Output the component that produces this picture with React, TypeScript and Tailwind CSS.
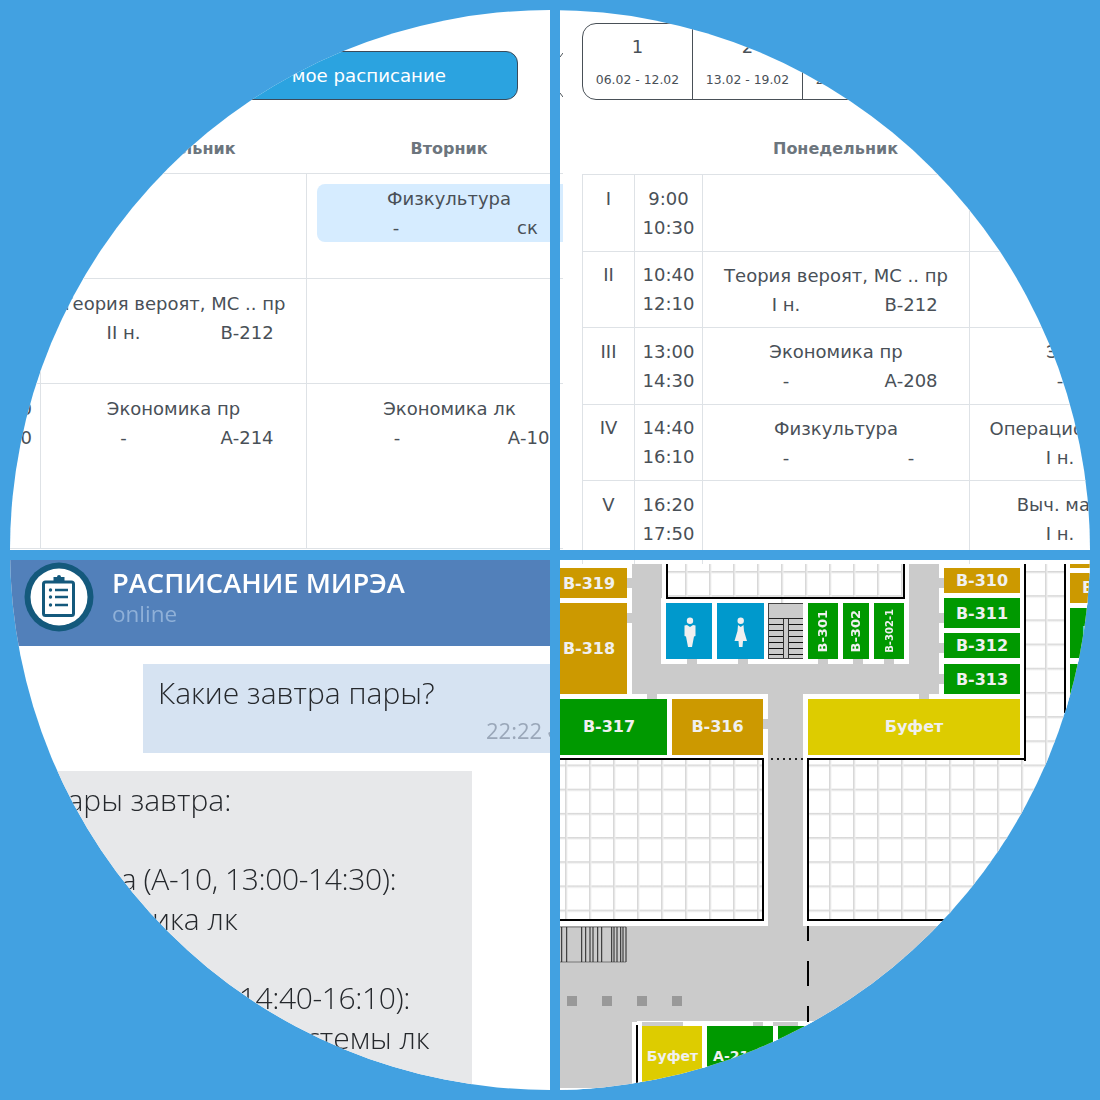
import type { ReactNode } from 'react';

const tableText = "font-['DejaVu_Sans',sans-serif] text-[18px] leading-[29px] text-[#495057]";

function Lesson({ title, left, right, cols, titleClass }: { title: string; left: string; right: string; cols: string; titleClass?: string }) {
  return (
    <div className="pt-[10px] text-center whitespace-nowrap">
      <div className={titleClass}>{title}</div>
      <div className={`grid ${cols}`}>
        <span>{left}</span>
        <span>{right}</span>
      </div>
    </div>
  );
}

const monCols = 'grid-cols-[148px_102px] pl-[9px]';
const monColsLeft = 'grid-cols-[145px_102px] pl-[10px]';
const tueCols = 'grid-cols-[160px_103px] pl-[10px]';

function Time({ from, to }: { from: string; to: string }) {
  return (
    <div className="pt-[10px] pr-[8px] whitespace-nowrap flex flex-col items-end">
      <div>{from}</div>
      <div>{to}</div>
    </div>
  );
}

function RightSchedule() {
  return (
    <div className={`bg-white overflow-hidden relative ${tableText}`}>
      <div className="flex justify-end pt-[41px] pr-[32px]">
        <div className="w-[400px] h-[49px] rounded-[12px] border border-[#3b4a5a] bg-[#2ba3e0] flex items-center justify-end pr-[71px] text-white text-[18.2px] whitespace-nowrap">
          мое расписание
        </div>
      </div>
      <div className="grid grid-cols-[30px_266px_286px] h-[73px] w-[582px] items-end pb-[13px] text-center font-bold text-[16px] leading-[22px] text-[#6c757d]">
        <span />
        <span>Понедельник</span>
        <span>Вторник</span>
      </div>
      <div className="w-[582px]">
        <div className="grid grid-cols-[30px_266px_286px] h-[105px] border-t border-[#dee2e6]">
          <Time from="9:00" to="10:30" />
          <div className="border-l border-[#dee2e6]" />
          <div className="border-l border-[#dee2e6] p-[10px]">
            <div className="w-[264px] h-[58px] rounded-[8px] bg-[#d6ecff] text-center">
              <div>Физкультура</div>
              <div className="grid grid-cols-[158px_105px]">
                <span>-</span>
                <span>ск</span>
              </div>
            </div>
          </div>
        </div>
        <div className="grid grid-cols-[30px_266px_286px] h-[105px] border-t border-[#dee2e6]">
          <Time from="10:40" to="12:10" />
          <div className="border-l border-[#dee2e6]">
            <Lesson title="Теория вероят, МС .. пр" left="II н." right="В-212" cols={monColsLeft} />
          </div>
          <div className="border-l border-[#dee2e6]" />
        </div>
        <div className="grid grid-cols-[30px_266px_286px] h-[166px] border-y border-[#dee2e6]">
          <Time from="13:00" to="14:30" />
          <div className="border-l border-[#dee2e6]">
            <Lesson title="Экономика пр" left="-" right="А-214" cols={monColsLeft} />
          </div>
          <div className="border-l border-[#dee2e6]">
            <Lesson title="Экономика лк" left="-" right="А-10" cols={tueCols} />
          </div>
        </div>
      </div>
    </div>
  );
}

const weeks = [
  ['1', '06.02 - 12.02'],
  ['2', '13.02 - 19.02'],
  ['3', '20.02 - 26.02'],
  ['4', '27.02 - 05.03'],
];

const periods: { num: string; from: string; to: string; mon?: [string, string, string]; tue?: [string, string, string]; tueTitle?: string }[] = [
  { num: 'I', from: '9:00', to: '10:30' },
  { num: 'II', from: '10:40', to: '12:10', mon: ['Теория вероят, МС .. пр', 'I н.', 'В-212'] },
  { num: 'III', from: '13:00', to: '14:30', mon: ['Экономика пр', '-', 'А-208'], tue: ['Экономика лк', '-', 'А-10'] },
  { num: 'IV', from: '14:40', to: '16:10', mon: ['Физкультура', '-', '-'], tue: ['Операционные системы лк', 'I н.', 'А-10'], tueTitle: 'pl-[12px]' },
  { num: 'V', from: '16:20', to: '17:50', tue: ['Выч. математика лк', 'I н.', 'А-10'] },
];

function WeekSchedule() {
  return (
    <div className={`bg-white overflow-hidden relative pl-[22px] pt-[13px] ${tableText}`}>
      {/* sliver of the neighbouring screenshot */}
      <div className="absolute left-0 top-0 w-[3px] h-full">
        <div className="absolute left-0 top-[163px] w-full h-px bg-[#dee2e6]" />
        <div className="absolute left-0 top-[174px] w-full h-[58px] bg-[#d6ecff]" />
        <div className="absolute left-0 top-[268px] w-full h-px bg-[#dee2e6]" />
        <div className="absolute left-0 top-[373px] w-full h-px bg-[#dee2e6]" />
        <div className="absolute left-0 top-[538px] w-full h-px bg-[#dee2e6]" />
        <svg className="absolute left-0 top-[42px]" width="3" height="47" viewBox="0 0 3 47" fill="none" stroke="#495057">
          <path d="M0 5 L3 1" />
          <path d="M0 41 L3 45" />
        </svg>
      </div>

      <div className="flex w-[440px] h-[77px] border border-[#495057] rounded-l-[14px]">
        {weeks.map(([n, dates], i) => (
          <div key={n} className={i === 0 ? 'w-[109px] shrink-0 text-center' : 'w-[110px] shrink-0 text-center border-l border-[#495057]'}>
            <div className="pt-[8px]">{n}</div>
            <div className="pt-[7px] text-[12.4px] leading-[24px]">{dates}</div>
          </div>
        ))}
      </div>

      <div className="grid grid-cols-[52px_68px_267px_286px] w-[673px] h-[74px] items-end pb-[14px] text-center font-bold text-[16px] leading-[22px] text-[#6c757d]">
        <span />
        <span />
        <span>Понедельник</span>
        <span>Вторник</span>
      </div>

      <div className="w-[673px]">
        {periods.map((p) => (
          <div key={p.num} className="grid grid-cols-[52px_68px_267px_286px] h-[76.6px] border-t border-[#dee2e6]">
            <div className="border-l border-[#dee2e6] pt-[8.5px] text-center">{p.num}</div>
            <div className="border-l border-[#dee2e6] pt-[8.5px] text-center">
              <div>{p.from}</div>
              <div>{p.to}</div>
            </div>
            <div className="border-l border-[#dee2e6] -mt-px">
              {p.mon && <Lesson title={p.mon[0]} left={p.mon[1]} right={p.mon[2]} cols={monCols} />}
            </div>
            <div className="border-l border-[#dee2e6] -mt-px">
              {p.tue && <Lesson title={p.tue[0]} left={p.tue[1]} right={p.tue[2]} cols={tueCols} titleClass={p.tueTitle} />}
            </div>
          </div>
        ))}
      </div>
    </div>
  );
}

function BotLogo() {
  return (
    <svg width="70" height="70" viewBox="0 0 70 70" className="shrink-0">
      <circle cx="35" cy="35" r="34.5" fill="#14597c" />
      <circle cx="35" cy="35" r="28.5" fill="#fff" />
      <rect x="19.5" y="20" width="30" height="33.5" rx="2" fill="#fff" stroke="#14597c" strokeWidth="3" />
      <path d="M29.5 20 V15 H33 A2 2 0 0 1 37 15 H40.5 V20 Z" fill="#14597c" />
      <circle cx="26.5" cy="28" r="1.7" fill="#14597c" />
      <circle cx="26.5" cy="35" r="1.7" fill="#14597c" />
      <circle cx="26.5" cy="43" r="1.7" fill="#14597c" />
      <path d="M31 28 H44 M31 35 H44 M31 43 H44" stroke="#14597c" strokeWidth="2.4" />
    </svg>
  );
}

function BotChat() {
  return (
    <div className="bg-white overflow-hidden font-['Open_Sans',sans-serif] font-light">
      <div className="blur-[0.4px]">
        <div className="h-[86px] bg-[#5280ba] flex items-start pl-[14px] pt-[2px] gap-[18px]">
          <BotLogo />
          <div className="pt-[3px]">
            <div className="text-white font-semibold text-[27.3px] leading-[36px] whitespace-nowrap">РАСПИСАНИЕ МИРЭА</div>
            <div className="text-[#8fb0d8] text-[22.5px] leading-[26px] font-normal">online</div>
          </div>
        </div>
        <div className="pt-[18px]">
          <div className="ml-[133px] h-[89px] bg-[#d6e3f2] pl-[15px] pt-[8px] text-[#25282c]">
            <div className="text-[30px] leading-[42px] whitespace-nowrap">Какие завтра пары?</div>
            <div className="flex gap-[3px] pl-[328px] pt-[1px] text-[#9aa7b9] text-[22px] leading-[30px] whitespace-nowrap font-normal">
              <span>22:22</span>
              <span>✓</span>
            </div>
          </div>
          <div className="mt-[18px] w-[462px] h-[330px] bg-[#e7e8ea] pl-[36px] pt-[9px] text-[30px] leading-[39.6px] text-[#25282c] whitespace-nowrap">
            <div>Пары завтра:</div>
            <div>&nbsp;</div>
            <div className="tracking-[-0.4px]">3 пара (А-10, 13:00-14:30):</div>
            <div>Экономика лк</div>
            <div>&nbsp;</div>
            <div className="tracking-[-0.4px]">4 пара (Г-111, 14:40-16:10):</div>
            <div>Операционные системы лк</div>
          </div>
        </div>
      </div>
    </div>
  );
}

function Room({ className, children }: { className: string; children?: ReactNode }) {
  return (
    <div className={`absolute flex items-center justify-center font-bold text-[#f0f0f0] whitespace-nowrap shadow-[0_0_0_5px_#fff] ${className}`}>
      {children}
    </div>
  );
}

function Notch({ className }: { className: string }) {
  return <div className={`absolute bg-[#cbcbcb] ${className}`} />;
}

function Wall({ className }: { className: string }) {
  return <div className={`absolute border-black ${className}`} />;
}

function Stairs() {
  return (
    <div className="absolute left-[208px] top-[43px] w-[36px] h-[56px] bg-[#cbcbcb] border border-[#444] flex flex-col">
      <div className="h-[15px] border-b border-[#222]" />
      <div className="flex-1 flex justify-between">
        <div className="w-[15px] border-r border-[#333] bg-[repeating-linear-gradient(to_bottom,#cbcbcb_0,#cbcbcb_5px,#111_5px,#111_6px)]" />
        <div className="w-[15px] border-l border-[#333] bg-[repeating-linear-gradient(to_bottom,#cbcbcb_0,#cbcbcb_5px,#111_5px,#111_6px)]" />
      </div>
    </div>
  );
}

function Gents() {
  return (
    <svg width="46" height="56" viewBox="0 0 46 56" fill="#f0f0f0">
      <circle cx="24" cy="17.7" r="3.2" />
      <path d="M18.5 22.5 L21 22 L24 24 L27 22 L29.5 22.5 L29.5 33 L28 33.5 L26 44 L22 44 L20 33.5 L18.5 33 Z" />
    </svg>
  );
}

function Ladies() {
  return (
    <svg width="47" height="56" viewBox="0 0 47 56" fill="#f0f0f0">
      <circle cx="23.7" cy="17.7" r="3.2" />
      <path d="M21 22 L23.7 24 L26.5 22 L27 28 L30 38 L26 38 L25.5 44 L22 44 L21.5 38 L17.5 38 L20.5 28 Z" />
    </svg>
  );
}

const stairLines = [1.7, 6.7, 21.7, 25.7, 30, 33, 37.7, 41.7, 51.7, 54, 57, 60.7, 63, 66];

const halls = [
  'left-[72px] top-[4px] w-[30px] h-[130px]',
  'left-[72px] top-[104px] w-[307px] h-[30px]',
  'left-[349px] top-[4px] w-[30px] h-[130px]',
  'left-[208px] top-[134px] w-[35px] h-[232px]',
  'left-0 top-[366px] w-[530px] h-[96px]',
  'left-0 top-[462px] w-[72px] h-[66px]',
];

function FloorMap() {
  return (
    <div className="relative overflow-hidden bg-white bg-[linear-gradient(to_right,#d4d4d4_0,#dcdcdc_1px,#f0f0f0_2px,transparent_3px),linear-gradient(to_bottom,#d4d4d4_0,#dcdcdc_1px,#f0f0f0_2px,transparent_3px)] bg-size-[24px_24.2px] bg-position-[5px_11px] font-['DejaVu_Sans',sans-serif] text-[16px]">
      {halls.map((h) => (
        <div key={h} className={`absolute shadow-[0_0_0_5px_#fff] ${h}`} />
      ))}
      {halls.map((h) => (
        <div key={h} className={`absolute bg-[#cbcbcb] ${h}`} />
      ))}

      <Room className="left-[-9px] top-[8px] w-[76px] h-[30px] bg-[#cc9900] pt-[1px]">В-319</Room>
      <Room className="left-[-9px] top-[43px] w-[76px] h-[91px] bg-[#cc9900]">В-318</Room>
      <Room className="left-[-9px] top-[139px] w-[116px] h-[56px] bg-[#009900]">В-317</Room>
      <Room className="left-[112px] top-[139px] w-[91px] h-[56px] bg-[#cc9900]">В-316</Room>
      <Room className="left-[106px] top-[43px] w-[46px] h-[56px] bg-[#0099cc]"><Gents /></Room>
      <Room className="left-[157px] top-[43px] w-[47px] h-[56px] bg-[#0099cc]"><Ladies /></Room>
      <Stairs />
      <Room className="left-[248px] top-[43px] w-[30px] h-[56px] bg-[#009900] text-[13px]">
        <span className="[writing-mode:vertical-rl] rotate-180">В-301</span>
      </Room>
      <Room className="left-[283px] top-[43px] w-[26px] h-[56px] bg-[#009900] text-[13px]">
        <span className="[writing-mode:vertical-rl] rotate-180">В-302</span>
      </Room>
      <Room className="left-[314px] top-[43px] w-[30px] h-[56px] bg-[#009900] text-[10px]">
        <span className="[writing-mode:vertical-rl] rotate-180">В-302-1</span>
      </Room>
      <Room className="left-[248px] top-[139px] w-[212px] h-[56px] bg-[#ddcc00]">Буфет</Room>
      <Room className="left-[384px] top-[8px] w-[76px] h-[25px] bg-[#cc9900]">В-310</Room>
      <Room className="left-[384px] top-[38px] w-[76px] h-[30px] bg-[#009900] pt-[1px]">В-311</Room>
      <Room className="left-[384px] top-[73px] w-[76px] h-[25px] bg-[#009900] pt-[1px]">В-312</Room>
      <Room className="left-[384px] top-[104px] w-[76px] h-[30px] bg-[#009900] pt-[1px]">В-313</Room>
      <Room className="left-[510px] top-[-4px] w-[76px] h-[12px] bg-[#cc9900]" />
      <Room className="left-[510px] top-[13px] w-[76px] h-[30px] bg-[#cc9900]">В-309</Room>
      <Room className="left-[510px] top-[48px] w-[76px] h-[50px] bg-[#009900]">В-308</Room>
      <Room className="left-[510px] top-[104px] w-[76px] h-[40px] bg-[#009900]">В-307</Room>
      <Room className="left-[82px] top-[466px] w-[61px] h-[70px] bg-[#ddcc00] text-[14px] pb-[10px]">Буфет</Room>
      <Room className="left-[147px] top-[466px] w-[66px] h-[70px] bg-[#009900] text-[14px] pb-[10px] pr-[8px]">А-211</Room>
      <Room className="left-[218px] top-[466px] w-[66px] h-[70px] bg-[#009900] text-[14px] pb-[10px]">А-212</Room>

      <Notch className="left-[67px] top-[18px] w-[5px] h-[10px]" />
      <Notch className="left-[67px] top-[53px] w-[5px] h-[10px]" />
      <Notch className="left-[127px] top-[99px] w-[10px] h-[5px]" />
      <Notch className="left-[178px] top-[99px] w-[10px] h-[5px]" />
      <Notch className="left-[258px] top-[99px] w-[10px] h-[5px]" />
      <Notch className="left-[293px] top-[99px] w-[10px] h-[5px]" />
      <Notch className="left-[324px] top-[99px] w-[10px] h-[5px]" />
      <Notch className="left-[87px] top-[134px] w-[10px] h-[5px]" />
      <Notch className="left-[359px] top-[134px] w-[10px] h-[5px]" />
      <Notch className="left-[203px] top-[159px] w-[5px] h-[10px]" />
      <Notch className="left-[379px] top-[18px] w-[5px] h-[10px]" />
      <Notch className="left-[379px] top-[53px] w-[5px] h-[10px]" />
      <Notch className="left-[379px] top-[83px] w-[5px] h-[10px]" />
      <Notch className="left-[379px] top-[114px] w-[5px] h-[10px]" />
      <Notch className="left-[82px] top-[462px] w-[41px] h-[4px]" />
      <Notch className="left-[193px] top-[462px] w-[10px] h-[4px]" />
      <Notch className="left-[213px] top-[462px] w-[25px] h-[4px]" />

      <Wall className="left-[106px] top-[3px] w-[239px] h-[36px] border-x-2 border-b-2" />
      <Wall className="left-[464px] top-[3px] h-[198px] border-l-2" />
      <Wall className="left-[247px] top-[198px] w-[219px] border-t-2" />
      <Wall className="left-[247px] top-[198px] h-[163px] border-l-2" />
      <Wall className="left-[247px] top-[359px] w-[300px] border-t-2" />
      <Wall className="left-0 top-[198px] w-[204px] h-[163px] border-y-2 border-r-2" />
      <Wall className="left-[504px] top-[3px] h-[150px] border-l-2" />
      <Wall className="left-[76px] top-[465px] h-[70px] border-l-2" />

      <div className="absolute left-[211px] top-[198px] w-[32px] flex justify-between">
        {[0, 1, 2, 3, 4, 5].map((d) => (
          <span key={d} className="w-[2px] h-[2px] bg-[#222]" />
        ))}
      </div>

      <Wall className="left-[247px] top-[366px] h-[15px] border-l-2" />
      <Wall className="left-[247px] top-[401px] h-[25px] border-l-2" />
      <Wall className="left-[247px] top-[446px] h-[16px] border-l-2" />

      <svg className="absolute left-0 top-[366px]" width="68" height="37" viewBox="0 0 68 37" fill="none" stroke="#222">
        <path d="M0 1 H66 M0 36 H66" stroke="#777" />
        {stairLines.map((x) => (
          <path key={x} d={`M${x} 1 V36`} />
        ))}
      </svg>

      <div className="absolute left-[7px] top-[436px] w-[10px] h-[10px] bg-[#999]" />
      <div className="absolute left-[42px] top-[436px] w-[10px] h-[10px] bg-[#999]" />
      <div className="absolute left-[77px] top-[436px] w-[10px] h-[10px] bg-[#999]" />
      <div className="absolute left-[112px] top-[436px] w-[10px] h-[10px] bg-[#999]" />

      {/* bottom of the schedule table runs on above the plan */}
      <div className="absolute left-0 top-0 w-full h-[4px] bg-white">
        <span className="absolute left-[22px] top-0 w-px h-full bg-[#dee2e6]" />
        <span className="absolute left-[74px] top-0 w-px h-full bg-[#dee2e6]" />
        <span className="absolute left-[142px] top-0 w-px h-full bg-[#dee2e6]" />
        <span className="absolute left-[409px] top-0 w-px h-full bg-[#dee2e6]" />
      </div>
    </div>
  );
}

export default function App() {
  return (
    <div className="w-[1100px] h-[1100px] bg-[#42a1e1] p-[10px]">
      <div className="w-[1080px] h-[1080px] rounded-full overflow-hidden grid grid-cols-[540px_530px] grid-rows-[540px_530px] gap-[10px]">
        <RightSchedule />
        <WeekSchedule />
        <BotChat />
        <FloorMap />
      </div>
    </div>
  );
}
